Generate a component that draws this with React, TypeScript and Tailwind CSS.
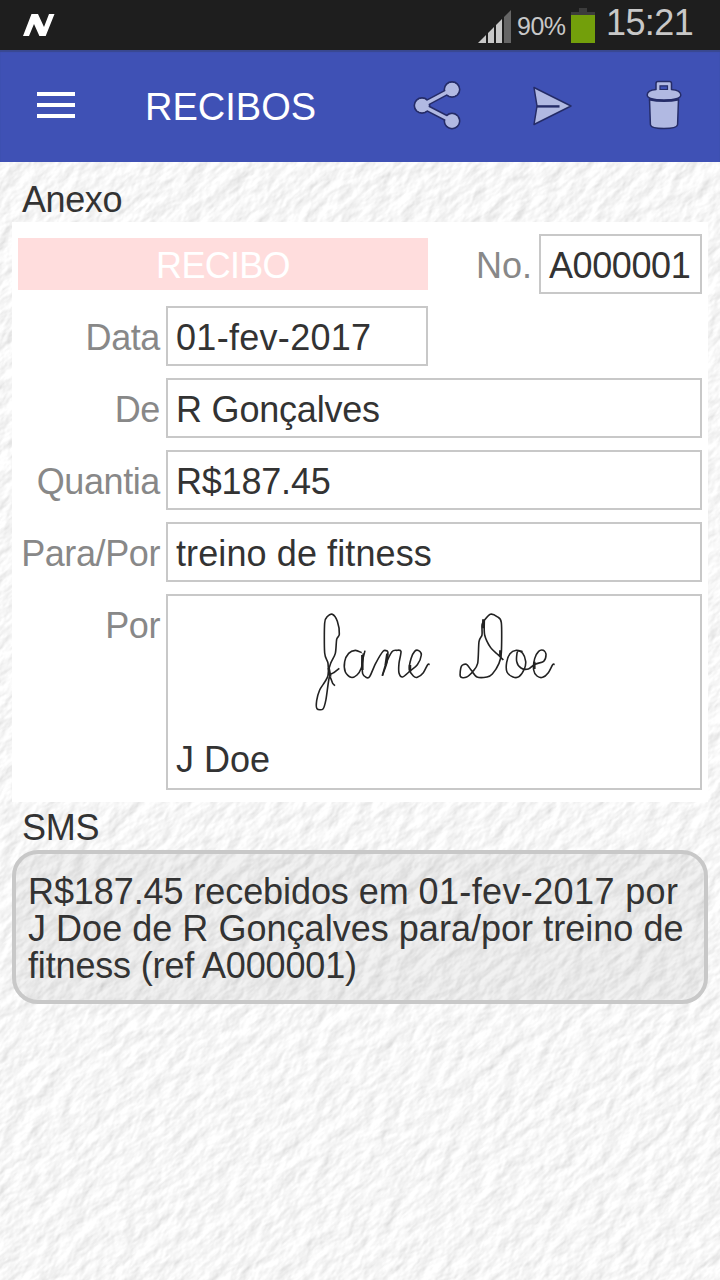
import type { ReactNode } from "react";

function PaperTexture() {
  return (
    <svg className="absolute inset-0 h-full w-full" aria-hidden="true">
      <defs>
        <filter id="paper" x="0" y="0" width="100%" height="100%" colorInterpolationFilters="sRGB">
          <feTurbulence type="fractalNoise" baseFrequency="0.045 0.075" numOctaves="5" seed="8" result="n" />
          <feDiffuseLighting in="n" surfaceScale="0.62" diffuseConstant="1.14" lightingColor="#ffffff">
            <feDistantLight azimuth="250" elevation="58" />
          </feDiffuseLighting>
        </filter>
      </defs>
      <rect width="100%" height="100%" fill="#f3f3f3" />
      <g transform="rotate(-40 360 560)">
        <rect x="-400" y="-300" width="1520" height="1720" filter="url(#paper)" />
      </g>
    </svg>
  );
}

function StatusBar() {
  return (
    <div className="flex h-[50px] items-start bg-[#1e1e1e] text-[#c8c8c8]">
      <svg className="mt-[13px] ml-[23px] h-6 w-8" viewBox="0 0 32 24" fill="#fff">
        <path d="M0 23 8.500 1h6.500l6 13L26 1h5.500L22.700 23h-6.300L11 11 6 23z" />
      </svg>
      <svg className="mt-[9px] ml-[423px] h-[35px] w-[34px]" viewBox="0 0 34 35">
        <path d="M0 34 8 26v8zM10 24l6-6v16h-6zM18 16l6-6v24h-6z" fill="#c8c8c8" />
        <path d="M26 8 33 1v33h-7z" fill="#666" />
      </svg>
      <span className="mt-[11px] ml-[5px] w-[49px] text-[25px] leading-[30px] tracking-[-0.5px]">90%</span>
      <svg className="mt-[7px] ml-[5px] h-9 w-6" viewBox="0 0 24 36">
        <path d="M8 1h8v4h8v3H0V5h8z" fill="#3c3c3c" />
        <path d="M0 8h24v28H0z" fill="#739f0b" />
      </svg>
      <span className="ml-[11px] text-[36px] leading-[45px] tracking-[-0.6px]">15:21</span>
    </div>
  );
}

function ActionBar() {
  return (
    <header className="flex h-28 items-start bg-[#3f51b5] shadow-[inset_0_2px_1px_#39488f]">
      <div className="mt-[42px] ml-[37px] flex w-[38px] flex-col gap-[7px]">
        <div className="h-1 bg-white" />
        <div className="h-1 bg-white" />
        <div className="h-1 bg-white" />
      </div>
      <h1 className="mt-[35px] ml-[70px] w-[268px] text-[38px] leading-[44px] text-white">RECIBOS</h1>
      <svg className="mt-[30px] h-[52px] w-[50px]" viewBox="0 0 50 52">
        <g stroke="#252c68" strokeWidth="2" fill="#b1b9e2">
          <circle cx="9" cy="25.5" r="7.5" />
          <circle cx="39" cy="9.5" r="7.5" />
          <circle cx="39" cy="41" r="7.5" />
        </g>
        <path d="M39 9.5 9 25.5 39 41" fill="none" stroke="#252c68" strokeWidth="6.5" />
        <path d="M39 9.5 9 25.5 39 41" fill="none" stroke="#b1b9e2" strokeWidth="3.6" />
        <g fill="#b1b9e2">
          <circle cx="9" cy="25.5" r="6.8" />
          <circle cx="39" cy="9.5" r="6.8" />
          <circle cx="39" cy="41" r="6.8" />
        </g>
      </svg>
      <svg className="mt-[35px] ml-[68px] h-[42px] w-[42px]" viewBox="0 0 42 42">
        <path
          d="M3 2.5 40 21 3 39.5 6 21z"
          fill="#b1b9e2"
          stroke="#252c68"
          strokeWidth="1.5"
          strokeLinejoin="round"
        />
        <path d="M6 21.4h22.5" stroke="#252c68" strokeWidth="2.4" />
      </svg>
      <svg className="mt-[29px] ml-[72px] h-[52px] w-[38px]" viewBox="0 0 38 52">
        <g fill="#b1b9e2" stroke="#252c68" strokeWidth="1.5" strokeLinejoin="round">
          <path d="M4.5 20h29l-.9 25.500c-.2 2.500-4 4-13.600 4S5.500 48 5.400 45.500z" />
          <path d="M11 10.500V4.500q0-2 2-2h11.500q2 0 2 2v6c6 .6 9.300 2 9.300 5.500 0 3-5 4.900-16.800 4.900S2.200 19 2.200 16C2.200 12.500 5 11.100 11 10.500z" />
        </g>
        <path d="M15 6.800h7.500v3.700H15z" fill="#3f51b5" stroke="#252c68" strokeWidth="1.200" />
        <path d="M4 20.500q15 3 30 0" fill="none" stroke="#252c68" strokeWidth="2.200" />
      </svg>
    </header>
  );
}

const signatureStrokes: number[][] = [
  [118, 205, 101, 218, 85, 222, 92, 190, 106, 160, 110, 118, 118, 103, 112, 64, 97, 43, 83, 49, 74, 69, 74, 159, 84, 190, 84, 226, 75, 245, 59, 270, 50, 302, 51, 326, 69, 327, 78, 298, 88, 232, 98, 250, 105, 257],
  [185, 158, 166, 151, 146, 160, 134, 185, 136, 216, 153, 232, 171, 225, 184, 204, 188, 180, 195, 152],
  [190, 160, 187, 190, 188, 221, 198, 232, 209, 230, 227, 190, 250, 153, 264, 154],
  [264, 154, 260, 190, 247, 227],
  [247, 227, 258, 191, 276, 155, 290, 151, 303, 154, 297, 190, 297, 219, 308, 231, 330, 213, 352, 194, 364, 165, 356, 152, 344, 154, 333, 176, 328, 208, 340, 228, 352, 232, 370, 218, 383, 194, 389, 193],
  [550, 64, 571, 43, 591, 50, 604, 68, 604, 158, 597, 190, 577, 222, 561, 231, 531, 231, 514, 211, 499, 193, 484, 199, 481, 229, 498, 232, 518, 215, 533, 190, 537, 125, 546, 105, 546, 75, 553, 61],
  [553, 61, 554, 105, 572, 143, 594, 164, 610, 180],
  [668, 155, 649, 151, 630, 161, 620, 187, 621, 216, 639, 231, 657, 230, 673, 207, 677, 184, 668, 160, 653, 154, 650, 184, 663, 204, 685, 207, 704, 193, 731, 184, 738, 163, 730, 151, 716, 154, 704, 176, 701, 210, 711, 228, 728, 232, 745, 218, 758, 194, 764, 193],
];

/** Joins the flat x,y list with Catmull-Rom segments so that the pen line is rounded. */
function penLine(flat: number[]) {
  const count = flat.length / 2;
  const at = (i: number) => {
    const k = Math.max(0, Math.min(count - 1, i)) * 2;
    return [flat[k], flat[k + 1]];
  };
  let d = `M${flat[0]} ${flat[1]}`;
  for (let i = 0; i < count - 1; i++) {
    const [a, b, c, e] = [at(i - 1), at(i), at(i + 1), at(i + 2)];
    d += `C${b[0] + (c[0] - a[0]) / 7} ${b[1] + (c[1] - a[1]) / 7} ${c[0] - (e[0] - b[0]) / 7} ${c[1] - (e[1] - b[1]) / 7} ${c[0]} ${c[1]}`;
  }
  return d;
}

function Signature() {
  return (
    <svg className="mt-1 ml-[132px] h-[120px] w-[270px]" viewBox="0 0 810 360">
      <g fill="none" stroke="#222" strokeWidth="4.800" strokeLinejoin="round">
        {signatureStrokes.map((stroke, i) => (
          <path key={i} d={penLine(stroke)} />
        ))}
        <path
          d="M86 204 91 230M187 165v45M262 161 257 195M330 195v20M550 58v27M601 151v20M703 185v22"
          strokeWidth="7.500"
        />
      </g>
    </svg>
  );
}

function Label({ children }: { children: ReactNode }) {
  return (
    <span className="mr-[6px] flex h-[60px] w-[148px] shrink-0 items-center justify-end pt-[3px] tracking-[-0.4px] text-[#888]">
      {children}
    </span>
  );
}

function Field({ label, value, box }: { label: string; value: string; box: string }) {
  return (
    <div className="flex h-[60px]">
      <Label>{label}</Label>
      <div className={`flex items-center border-2 border-[#c8c8c8] pt-[3px] pl-2 ${box}`}>{value}</div>
    </div>
  );
}

export default function App() {
  return (
    <div className="flex h-[1280px] w-[720px] flex-col overflow-hidden font-['Liberation_Sans',sans-serif]">
      <StatusBar />
      <ActionBar />
      <main className="relative grow text-[36px] leading-[37px] text-[#333]">
        <PaperTexture />
        <div className="relative px-3">
          <h2 className="h-[60px] pt-[19px] pl-[10px] tracking-[-0.4px]">Anexo</h2>
          <section className="flex h-[580px] flex-col gap-3 bg-white pt-3 whitespace-nowrap">
            <div className="flex h-[60px]">
              <div className="mt-1 ml-1.5 flex h-[52px] w-[410px] items-center justify-center bg-[#ffdddd] pt-[3px] tracking-[-0.7px] text-white">
                RECIBO
              </div>
              <span className="mr-[7px] flex w-[104px] items-center justify-end pt-[3px] text-[#888]">No.</span>
              <div className="flex w-[163px] items-center border-2 border-[#c8c8c8] pt-[3px] pl-2 tracking-[-0.4px]">
                A000001
              </div>
            </div>
            <Field label="Data" value="01-fev-2017" box="w-[262px] tracking-[0.3px]" />
            <Field label="De" value="R Gonçalves" box="w-[536px] tracking-[-0.2px]" />
            <Field label="Quantia" value="R$187.45" box="w-[536px] tracking-[-0.2px]" />
            <Field label="Para/Por" value="treino de fitness" box="w-[536px] tracking-[0.1px]" />
            <div className="flex">
              <Label>Por</Label>
              <div className="flex h-[196px] w-[536px] flex-col border-2 border-[#c8c8c8]">
                <Signature />
                <span className="mt-[21px] pl-2">J Doe</span>
              </div>
            </div>
          </section>
          <h2 className="h-12 pt-[7px] pl-[10px] tracking-[-0.2px]">SMS</h2>
          <p className="h-[154px] rounded-[26px] border-4 border-[#c8c8c8] bg-black/5 pt-[19px] pl-3 whitespace-nowrap">
            <span className="tracking-[-0.08px]">R$187.45 recebidos em </span>
            <span className="tracking-[0.38px]">01-fev-2017 por</span>
            <br />
            <span className="tracking-[0.03px]">J Doe de R Gonçalves para/por treino de</span>
            <br />
            <span className="tracking-[-0.16px]">fitness (ref A000001)</span>
          </p>
        </div>
      </main>
    </div>
  );
}
